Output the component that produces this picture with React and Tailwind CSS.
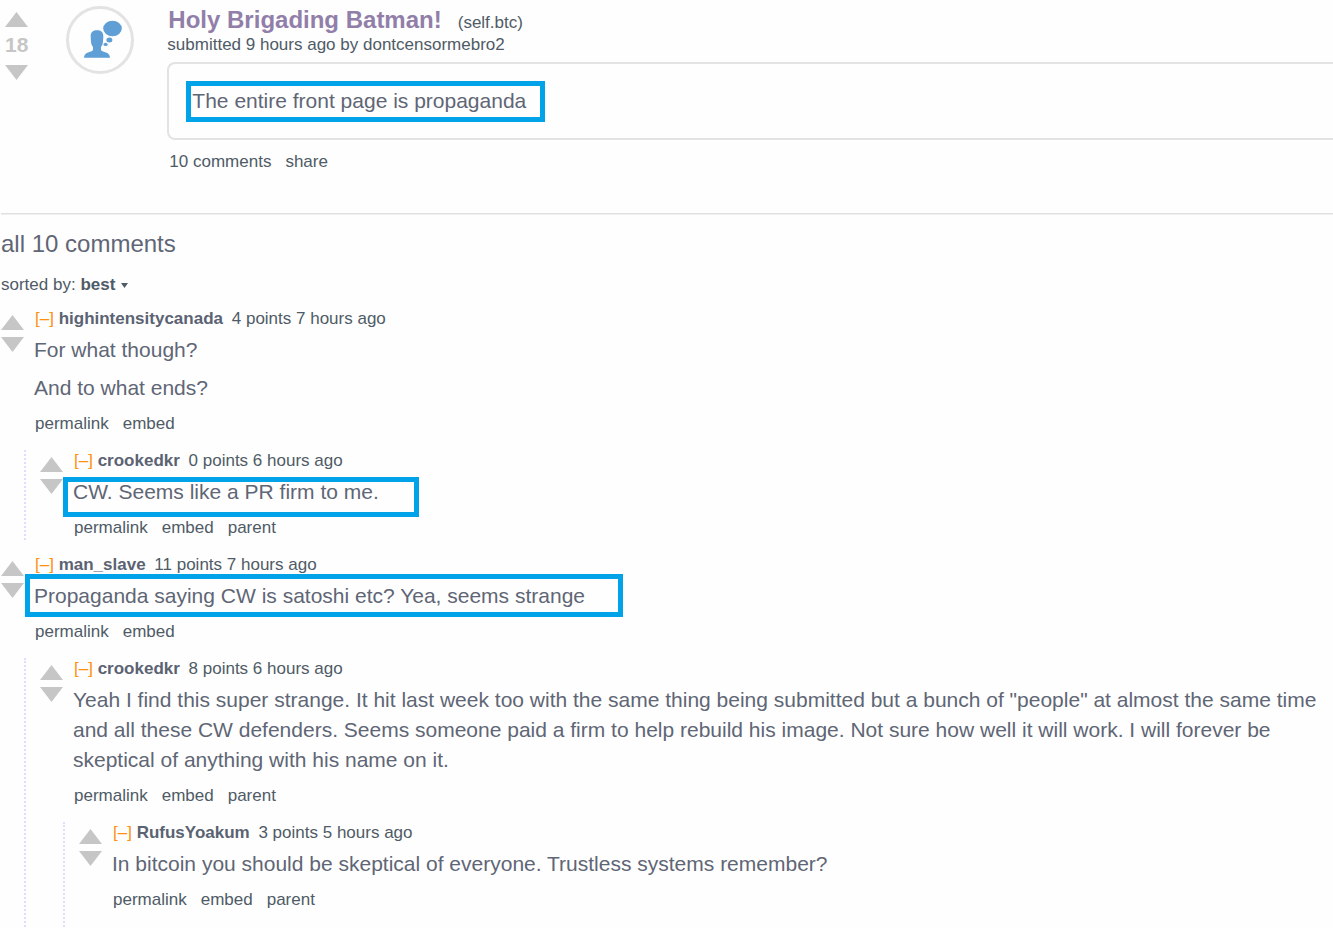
const comments = [
  {
    author: 'highintensitycanada',
    score: '4 points',
    age: '7 hours ago',
    body: ['For what though?', 'And to what ends?'],
    replies: [
      {
        author: 'crookedkr',
        score: '0 points',
        age: '6 hours ago',
        body: ['CW. Seems like a PR firm to me.'],
        highlight: '-left-2.5 top-0 w-[356px] h-10',
      },
    ],
  },
  {
    author: 'man_slave',
    score: '11 points',
    age: '7 hours ago',
    body: ['Propaganda saying CW is satoshi etc? Yea, seems strange'],
    highlight: '-left-[9px] -top-[7px] w-[598px] h-[43px]',
    replies: [
      {
        author: 'crookedkr',
        score: '8 points',
        age: '6 hours ago',
        body: [
          'Yeah I find this super strange. It hit last week too with the same thing being submitted but a bunch of "people" at almost the same time and all these CW defenders. Seems someone paid a firm to help rebuild his image. Not sure how well it will work. I will forever be skeptical of anything with his name on it.',
        ],
        replies: [
          {
            author: 'RufusYoakum',
            score: '3 points',
            age: '5 hours ago',
            body: ['In bitcoin you should be skeptical of everyone. Trustless systems remember?'],
            continues: true,
          },
        ],
      },
    ],
  },
];

function Arrow({ down }) {
  return (
    <button type="button" aria-label={down ? 'downvote' : 'upvote'} className="block">
      <svg width="23" height="15" viewBox="0 0 23 15" className="block fill-[#c6c6c6]">
        <path d={down ? 'M0 0h23L11.5 15z' : 'M0 15h23L11.5 0z'} />
      </svg>
    </button>
  );
}

function Highlight({ className }) {
  return <span className={`absolute border-5 border-[#00a2e8] pointer-events-none ${className}`} />;
}

function Comment({ comment, nested }) {
  const links = nested ? ['permalink', 'embed', 'parent'] : ['permalink', 'embed'];

  return (
    <article>
      <div className={comment.continues ? 'flex gap-2.5 pb-10' : 'flex gap-2.5 pb-px'}>
        <div className="flex flex-col gap-[7px] pt-[7px] shrink-0">
          <Arrow />
          <Arrow down />
        </div>
        <div className="flex-1 min-w-0">
          <p className="leading-[22px] pl-px">
            <button type="button" className="text-[#ff9010]">[–]</button>{' '}
            <a href="#" className="font-bold text-[#5b6373] mr-1">{comment.author}</a>{' '}
            {comment.score} {comment.age}
          </p>
          <div className="relative mt-[5px] space-y-2 text-[21px] leading-[30px] text-[#5f6675]">
            {comment.body.map((text) => (
              <p key={text}>{text}</p>
            ))}
            {comment.highlight && <Highlight className={comment.highlight} />}
          </div>
          <div className="flex gap-3.5 mt-2.5 pl-px leading-[22px]">
            {links.map((link) => (
              <a key={link} href="#">{link}</a>
            ))}
          </div>
        </div>
      </div>

      {comment.replies && (
        <div className="mt-3.5 ml-[23px] pl-3.5 border-l-2 border-dotted border-[#ddddff]">
          {comment.replies.map((reply) => (
            <Comment key={reply.author} comment={reply} nested />
          ))}
        </div>
      )}
    </article>
  );
}

export default function App() {
  return (
    <div className="min-h-screen bg-[#fefefe] overflow-hidden font-['Liberation_Sans',Arial,sans-serif] text-[17px] text-[#4f5b66]">
      {/* Post */}
      <header className="flex pl-[5px] pt-1.5">
        <div className="flex flex-col items-center pt-1.5 shrink-0">
          <Arrow />
          <span className="mt-2 mb-2.5 text-[21px] leading-5 font-bold text-[#c6c6c6]">18</span>
          <Arrow down />
        </div>

        <div className="ml-[38px] size-[68px] shrink-0 rounded-full border-3 border-[#e3e3e3]">
          <svg viewBox="0 0 62 62" className="fill-[#5f9fd5]">
            <ellipse cx="43.5" cy="19.5" rx="9.3" ry="7.8" />
            <ellipse cx="40.4" cy="31" rx="3" ry="2.5" />
            <ellipse cx="36.6" cy="35.4" rx="2.1" ry="1.7" />
            <path d="M21.7 27c0-4 2.300-5.800 6.300-5.800s6.300 1.800 6.300 5.800c0 2.500-.2 4-.3 5.500-.2 2.500-.8 4-2 5.500v3c1 1.500 3 1.700 5 2.500 2.500 1 4 2.500 4 5.200H15c0-2.700 1.500-4.200 4-5.200 2-.8 4-1 5-2.500v-3c-1.200-1.500-1.800-3-2-5.500-.1-1.500-.3-3-.3-5.500z" />
          </svg>
        </div>

        <div className="ml-[33px] flex-1 min-w-0">
          <div className="flex items-baseline gap-4 pl-px">
            <h1 className="text-[24px] leading-7 font-bold">
              <a href="#" className="text-[#917fa9]">Holy Brigading Batman!</a>
            </h1>
            <a href="#" className="leading-5">(self.btc)</a>
          </div>
          <p className="leading-[22px]">
            submitted 9 hours ago by <a href="#">dontcensormebro2</a>
          </p>
          <div className="mt-1.5 py-[22px] pl-[23px] rounded-l-lg border-2 border-r-0 border-[#e3e3e3]">
            <p className="relative text-[21px] leading-[30px] text-[#5f6675]">
              The entire front page is propaganda
              <Highlight className="-left-1.5 -top-[5px] w-[359px] h-[41px]" />
            </p>
          </div>
          <div className="flex gap-3.5 mt-3 pl-0.5 leading-5">
            <a href="#">10 comments</a>
            <a href="#">share</a>
          </div>
        </div>
      </header>

      {/* Comments */}
      <main className="pl-px pr-1">
        <div className="mt-[41px] -mr-1 border-t border-[#e0e0e0]" />
        <div className="-mr-1 border-t border-[#f0f0f0]" />
        <h2 className="mt-[13px] text-[24px] leading-8 text-[#5f6675]">all 10 comments</h2>
        <p className="mt-3.5 leading-[22px]">
          sorted by:{' '}
          <button type="button" className="inline-flex items-center gap-1.5 font-bold">
            best
            <svg width="7" height="5" viewBox="0 0 7 5" className="fill-current">
              <path d="M0 0h7L3.5 5z" />
            </svg>
          </button>
        </p>
        <div className="mt-3 space-y-3.5">
          {comments.map((comment) => (
            <Comment key={comment.author} comment={comment} />
          ))}
        </div>
      </main>
    </div>
  );
}
